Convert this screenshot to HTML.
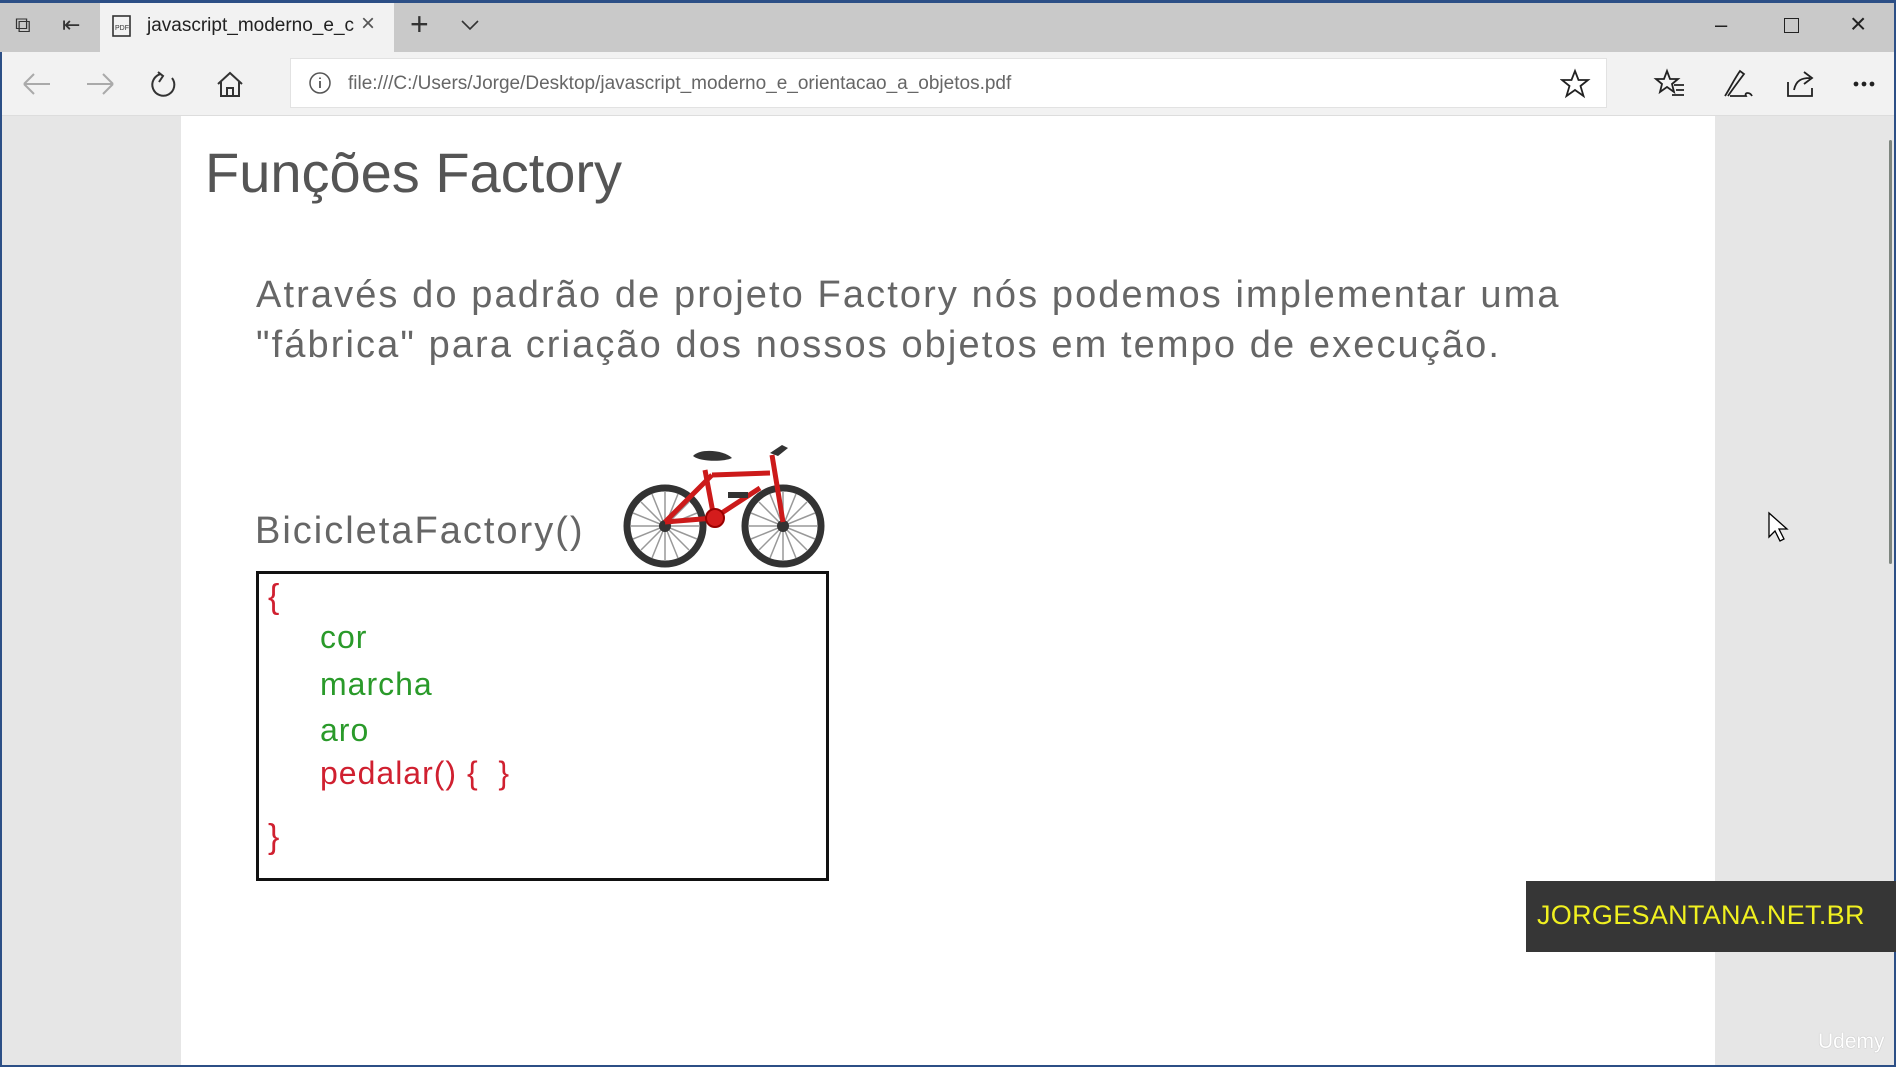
<!DOCTYPE html>
<html><head><meta charset="utf-8"><style>
*{margin:0;padding:0;box-sizing:border-box}
body{width:1896px;height:1067px;overflow:hidden;background:#2c4f86;font-family:"Liberation Sans",sans-serif;position:relative}
.abs{position:absolute}
#tabs{left:0;top:3px;width:1894px;height:49px;background:#c9c9c9}
#tab{left:100px;top:3px;width:294px;height:49px;background:#f2f2f2}
#tool{left:2px;top:52px;width:1892px;height:64px;background:#f2f2f2;border-bottom:1px solid #ddd}
#addr{left:290px;top:58px;width:1317px;height:50px;background:#fff;border:1px solid #e2e2e2}
#page{left:2px;top:116px;width:1892px;height:949px;background:#e6e6e6}
#sheet{left:181px;top:116px;width:1534px;height:949px;background:#fff}
.t{color:#555;white-space:nowrap}
.ic{color:#333;font-size:24px}
</style></head><body>
<div id="tabs" class="abs"></div>
<div id="tab" class="abs"></div>
<div class="abs ic" style="left:15px;top:12px;font-size:22px">⧉</div>
<div class="abs ic" style="left:62px;top:12px;font-size:22px">⇤</div>
<svg class="abs" style="left:110px;top:14px" width="24" height="24"><rect x="3" y="2" width="17" height="20" fill="none" stroke="#333" stroke-width="1.6"/><text x="5" y="16" font-size="7" font-family="Liberation Sans" fill="#333">PDF</text></svg>
<div class="abs" style="left:147px;top:15px;font-size:19px;color:#222">javascript_moderno_e_c</div>
<div class="abs" style="left:361px;top:10px;font-size:24px;color:#555">×</div>
<div class="abs" style="left:410px;top:6px;font-size:32px;color:#333;font-weight:300">+</div>
<svg class="abs" style="left:460px;top:18px" width="20" height="14"><path d="M2 3 L10 11 L18 3" fill="none" stroke="#333" stroke-width="1.6"/></svg>
<div class="abs" style="left:1715px;top:12px;font-size:22px;color:#222">–</div>
<div class="abs" style="left:1784px;top:18px;width:15px;height:15px;border:1.6px solid #222"></div>
<div class="abs" style="left:1850px;top:8px;font-size:28px;color:#222">×</div>
<div id="tool" class="abs"></div>
<svg class="abs" style="left:20px;top:68px" width="300" height="34" fill="none" stroke-width="2">
<path d="M4 16 H30 M4 16 L14 6 M4 16 L14 26" stroke="#aaa"/>
<path d="M67 16 H93 M93 16 L83 6 M93 16 L83 26" stroke="#aaa"/>
<path d="M141 6 A11 11 0 1 0 152 10 M138 4 L143 8 L139 14" stroke="#333"/>
<path d="M198 16 L210 5 L222 16 M201 14 V28 H219 V14 M207 28 V20 H213 V28" stroke="#333"/>
</svg>
<div id="addr" class="abs"></div>
<svg class="abs" style="left:308px;top:71px" width="24" height="24"><circle cx="12" cy="12" r="10" fill="none" stroke="#555" stroke-width="1.5"/><path d="M12 10 V17 M12 6.5 V8" stroke="#555" stroke-width="1.8"/></svg>
<div class="abs" style="left:348px;top:73px;font-size:19px;color:#666">file:///C:/Users/Jorge/Desktop/javascript_moderno_e_orientacao_a_objetos.pdf</div>
<svg class="abs" style="left:1560px;top:68px" width="320" height="34" fill="none" stroke="#222" stroke-width="1.8">
<path d="M15 3 L18.5 12 H28 L20.5 18 L23.5 28 L15 22 L6.5 28 L9.5 18 L2 12 H11.5 Z"/>
<path d="M107 3 L110 11 H118 L112 16 L114 24 L107 19 L100 24 L102 16 L96 11 H104 Z M114 17 H124 M116 22 H124 M112 27 H124"/>
<path d="M165 28 C170 20 175 10 180 3 L184 6 C178 14 172 22 168 28 M170 28 H186 C184 24 190 24 192 28"/>
<path d="M228 14 V28 H252 V20 M234 22 C236 12 242 10 250 10 M244 4 L252 10 L244 16"/>
<circle cx="296" cy="16" r="1.5" fill="#222"/><circle cx="304" cy="16" r="1.5" fill="#222"/><circle cx="312" cy="16" r="1.5" fill="#222"/>
</svg>
<div id="page" class="abs"></div>
<div id="sheet" class="abs"></div>
<div class="abs" style="left:1889px;top:140px;width:3px;height:424px;background:#7d857e;border-radius:2px"></div>
<div class="abs t" style="left:205px;top:140px;font-size:56px;color:#555">Funções Factory</div>
<div class="abs t" style="left:256px;top:270px;font-size:38px;line-height:50px;color:#666;letter-spacing:2.1px">Através do padrão de projeto Factory nós podemos implementar uma<br>"fábrica" para criação dos nossos objetos em tempo de execução.</div>
<div class="abs t" style="left:255px;top:510px;font-size:38px;color:#666;letter-spacing:2px">BicicletaFactory()</div>
<div class="abs" style="left:256px;top:571px;width:573px;height:310px;border:3px solid #111"></div>
<div class="abs" style="left:268px;top:578px;font-size:34px;color:#d02030">{</div>
<div class="abs" style="left:320px;top:614px;font-size:32px;color:#2a9a2a;line-height:46.5px;letter-spacing:1px">cor<br>marcha<br>aro</div>
<div class="abs" style="left:320px;top:755px;font-size:32px;color:#d02030;letter-spacing:1px">pedalar() {&nbsp; }</div>
<div class="abs" style="left:268px;top:818px;font-size:34px;color:#d02030">}</div>
<svg class="abs" style="left:620px;top:440px" width="210" height="130" viewBox="0 0 210 130">
<g fill="#fff" stroke="#333"><circle cx="45" cy="86" r="38" stroke-width="7"/><circle cx="163" cy="86" r="38" stroke-width="7"/></g>
<g stroke="#999" stroke-width="1.5">
<path d="M45 52 V120 M11 86 H79 M21 62 L69 110 M69 62 L21 110 M32 54 L58 118 M58 54 L32 118 M13 73 L77 99 M77 73 L13 99"/>
<path d="M163 52 V120 M129 86 H197 M139 62 L187 110 M187 62 L139 110 M150 54 L176 118 M176 54 L150 118 M131 73 L195 99 M195 73 L131 99"/></g>
<circle cx="45" cy="86" r="6" fill="#333"/><circle cx="163" cy="86" r="6" fill="#333"/>
<g stroke="#cc1a1a" stroke-width="5" fill="none" stroke-linejoin="round">
<path d="M45 82 L94 78 L85 30 M92 35 L150 33 M45 82 L92 35 M94 78 L140 48 M152 15 L163 82"/></g>
<path d="M108 52 H128 V58 H108Z" fill="#333"/>
<circle cx="95" cy="78" r="9" fill="#d41c1c" stroke="#900" stroke-width="2"/>
<path d="M73 16 C80 8 104 10 112 18 C104 22 80 22 73 16Z" fill="#333"/>
<path d="M150 13 L162 5 L168 8 L158 16Z" fill="#333"/>
</svg>
<svg class="abs" style="left:1767px;top:511px" width="22" height="32"><path d="M2 2 V26 L8 20 L13 30 L17 28 L12 18 H20 Z" fill="#fff" stroke="#000" stroke-width="1.3"/></svg>
<div class="abs" style="left:1526px;top:881px;width:370px;height:71px;background:#363636"></div>
<div class="abs t" style="left:1537px;top:900px;font-size:27px;color:#f0f020;letter-spacing:0.3px">JORGESANTANA.NET.BR</div>
<div class="abs t" style="left:1818px;top:1030px;font-size:21px;color:#fff;text-shadow:0 0 1px #999">Udemy</div>
</body></html>
